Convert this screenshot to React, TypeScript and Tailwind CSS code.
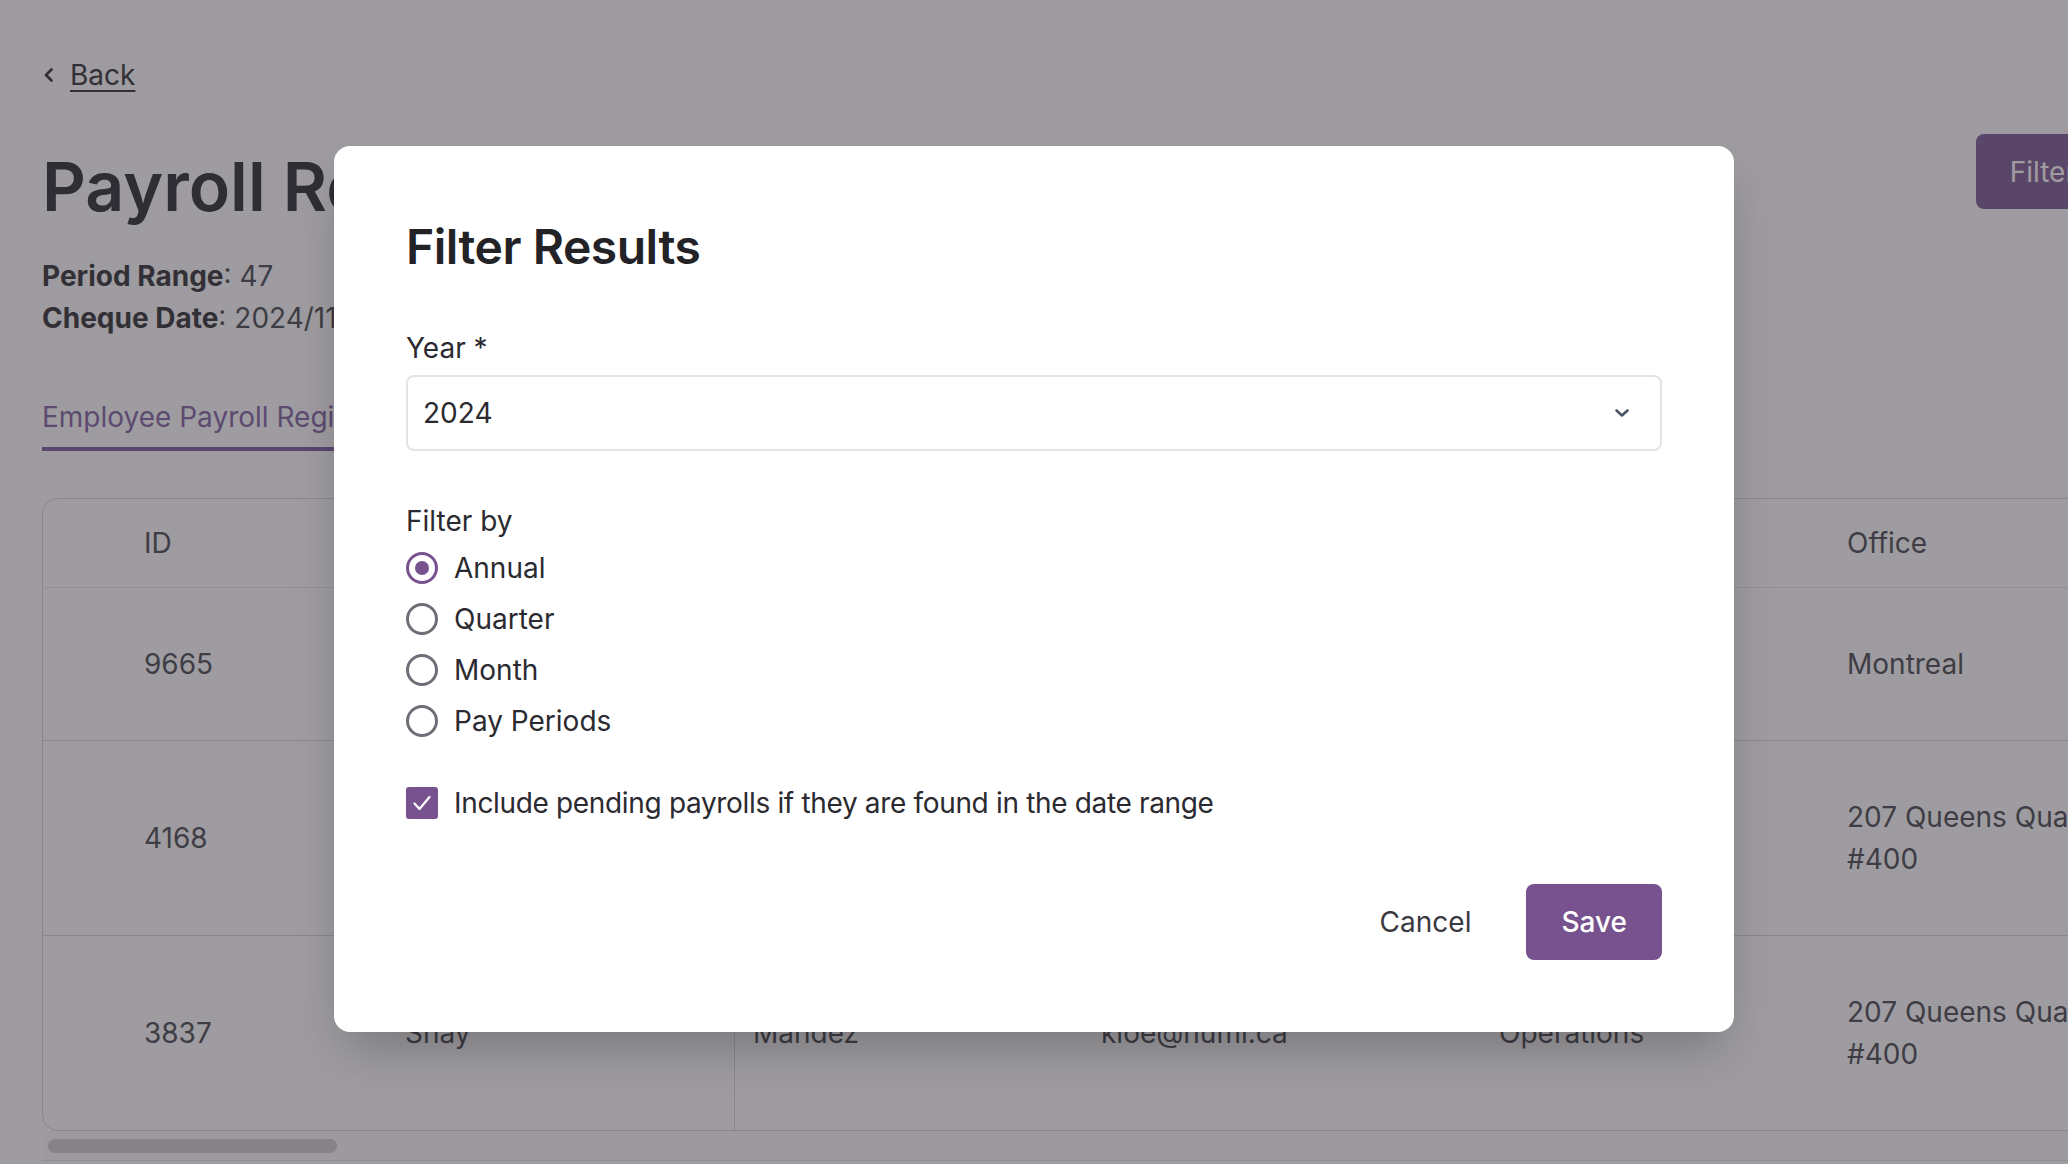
import React from 'react';

// Table rows behind the dialog
interface Row {
  id: string;
  first: string;
  last: string;
  email: string;
  dept: string;
  office: string[];
}

const rows: Row[] = [
  { id: '9665', first: 'Jordan', last: 'Leblanc', email: 'jordan@numi.ca', dept: 'Finance', office: ['Montreal'] },
  { id: '4168', first: 'Priya', last: 'Sharma', email: 'priya@numi.ca', dept: 'Engineering', office: ['207 Queens Quay', '#400'] },
  { id: '3837', first: 'Shay', last: 'Mandez', email: 'kloe@numi.ca', dept: 'Operations', office: ['207 Queens Quay', '#400'] },
];

const cellBase = 'flex items-center shrink-0';

const TableRow: React.FC<{ row: Row; last?: boolean }> = ({ row, last }) => (
  <div className={`flex ${last ? '' : 'border-b border-[#d4d4d8]'}`}>
    <div className={`${cellBase} w-[344px] pl-[101px] py-[55px]`}>{row.id}</div>
    <div className={`${cellBase} w-[348px] pl-[18px] py-[55px] border-r border-[#d4d4d8]`}>{row.first}</div>
    <div className={`${cellBase} w-[348px] pl-[18px] py-[55px]`}>{row.last}</div>
    <div className={`${cellBase} w-[398px] pl-[18px] py-[55px]`}>{row.email}</div>
    <div className={`${cellBase} w-[348px] pl-[18px] py-[55px]`}>{row.dept}</div>
    <div className={`${cellBase} w-[400px] pl-[18px] py-[55px]`}>
      <div className="flex flex-col whitespace-nowrap">
        {row.office.map((line) => (
          <span key={line}>{line}</span>
        ))}
      </div>
    </div>
  </div>
);

const Page: React.FC = () => (
  <div className="w-[2152px] pl-[42px] pt-[54px] text-[28px] leading-[42px] text-[#3f3f46]">
    <a className="flex items-center gap-[14px] text-[#27272a]">
      <svg width="14" height="16" viewBox="0 0 14 16" fill="none">
        <path d="M9.5 2.5 L4 8 L9.5 13.5" stroke="#27272a" strokeWidth="2.8" strokeLinecap="round" strokeLinejoin="round" />
      </svg>
      <span className="underline underline-offset-[5px] decoration-2">Back</span>
    </a>

    <div className="mt-[38px] flex justify-between items-start pr-[42px]">
      <h1 className="mt-[13px] text-[68px] leading-[78px] font-semibold text-[#232329]">Payroll Register</h1>
      <button className="h-[75px] px-[34px] rounded-lg bg-[#77528e] text-white text-[28px]">Filter</button>
    </div>

    <div className="mt-[30px]">
      <p>
        <span className="font-bold text-[#27272a]">Period Range</span>: 47
      </p>
      <p>
        <span className="font-bold text-[#27272a]">Cheque Date</span>: 2024/11/15
      </p>
    </div>

    <div className="mt-[57px] flex">
      <div className="pb-[9px] border-b-4 border-[#77539b] text-[#7d5ba0]">Employee Payroll Register</div>
    </div>

    <div className="mt-[47px] border border-[#d4d4d8] rounded-l-2xl overflow-hidden">
      <div className="flex border-b border-[#e4e4e7]">
        <div className={`${cellBase} w-[344px] pl-[101px] py-[23px]`}>ID</div>
        <div className={`${cellBase} w-[348px] pl-[18px] py-[23px] border-r border-[#d4d4d8]`}>First Name</div>
        <div className={`${cellBase} w-[348px] pl-[18px] py-[23px]`}>Last Name</div>
        <div className={`${cellBase} w-[398px] pl-[18px] py-[23px]`}>Email</div>
        <div className={`${cellBase} w-[348px] pl-[18px] py-[23px]`}>Department</div>
        <div className={`${cellBase} w-[400px] pl-[18px] py-[23px]`}>Office</div>
      </div>
      {rows.map((r, i) => (
        <TableRow key={r.id} row={r} last={i === rows.length - 1} />
      ))}
    </div>

    <div className="h-[30px] bg-[#fafafa] border-b border-[#e4e4e7] flex items-center pl-[6px]">
      <div className="w-[289px] h-[14px] rounded-full bg-[#cccbcf]" />
    </div>
  </div>
);

const Radio: React.FC<{ checked?: boolean; label: string }> = ({ checked, label }) => (
  <label className="h-[44px] flex items-center gap-[16px]">
    {checked ? (
      <span className="w-8 h-8 rounded-full border-[3px] border-[#77528e] flex items-center justify-center">
        <span className="w-[14px] h-[14px] rounded-full bg-[#77528e]" />
      </span>
    ) : (
      <span className="w-8 h-8 rounded-full border-[3px] border-[#6f6e76]" />
    )}
    <span>{label}</span>
  </label>
);

const FilterDialog: React.FC = () => (
  <div className="w-[1400px] bg-white rounded-2xl shadow-2xl px-[72px] pt-[72px] pb-[72px] text-[28px] leading-[42px] text-[#2b2a30]">
    <h2 className="text-[48px] leading-[57.6px] font-semibold tracking-[-0.01em] text-[#232227]">Filter Results</h2>

    <label className="mt-[51px] block">Year *</label>
    <div className="mt-[6px] h-[76px] border-2 border-[#e4e4e7] rounded-lg flex items-center justify-between pl-[15px] pr-[31px]">
      <span>2024</span>
      <svg width="14" height="8" viewBox="0 0 14 8" fill="none">
        <path d="M1.5 1.5 L7 6.5 L12.5 1.5" stroke="#4b5563" strokeWidth="2.6" strokeLinecap="round" strokeLinejoin="round" />
      </svg>
    </div>

    <p className="mt-[49px]">Filter by</p>
    <div className="mt-[4px] flex flex-col gap-[7px]">
      <Radio checked label="Annual" />
      <Radio label="Quarter" />
      <Radio label="Month" />
      <Radio label="Pay Periods" />
    </div>

    <label className="mt-[38px] h-[44px] flex items-center gap-[16px]">
      <span className="w-8 h-8 rounded-[3px] bg-[#77528e] flex items-center justify-center">
        <svg width="32" height="32" viewBox="0 0 32 32" fill="none">
          <path d="M8.5 16.5 L13.5 22 L23.5 10" stroke="white" strokeWidth="2.2" strokeLinecap="round" strokeLinejoin="round" />
        </svg>
      </span>
      <span className="tracking-[-0.012em]">Include pending payrolls if they are found in the date range</span>
    </label>

    <div className="mt-[59px] flex justify-end items-center gap-[31px]">
      <button className="h-[76px] px-[24px] text-[#3a3940]">Cancel</button>
      <button className="h-[76px] px-[35px] rounded-lg bg-[#77528e] text-white font-medium">Save</button>
    </div>
  </div>
);

export default function App() {
  return (
    <div className="relative w-[2068px] h-[1164px] overflow-hidden bg-white font-['Inter',sans-serif]">
      <Page />
      <div className="absolute inset-0 bg-[#3e3a42]/50 flex items-start justify-center pt-[146px]">
        <FilterDialog />
      </div>
    </div>
  );
}
